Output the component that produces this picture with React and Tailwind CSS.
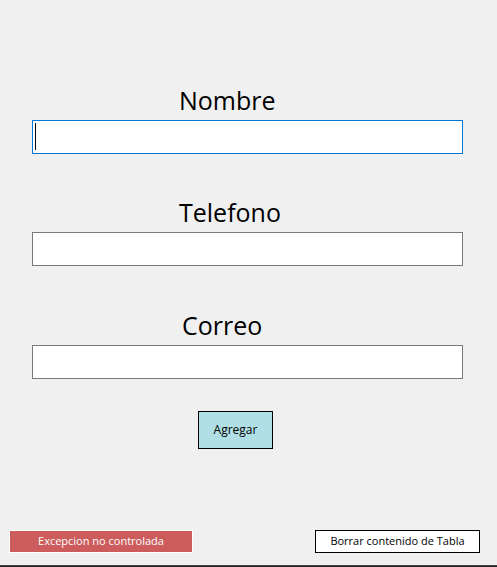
import React from 'react';

const Campo = ({ label, left, top, activo }) => {
    return (
        <div className={`flex flex-col ${top}`}>
            <p className={`h-[34px] leading-[34px] text-[25px] text-black ${left}`}>{label}</p>
            <div className={`mt-[3px] ml-[32px] w-[431px] h-[34px] bg-white border ${activo ? 'border-[#0078d7]' : 'border-[#7a7a7a]'} pl-[2px] pt-[2px]`}>
                {activo && <div className='w-px h-[27px] bg-black'></div>}
            </div>
        </div>
    );
};

export default function App() {
    return (
        <div className="w-[497px] h-[567px] bg-[#f0f0f0] flex flex-col overflow-hidden" style={{ fontFamily: '"Open Sans", "Noto Sans", sans-serif' }}>
            <Campo label="Nombre" left="ml-[179px]" top="mt-[83px]" activo />
            <Campo label="Telefono" left="ml-[179px]" top="mt-[41px]" />
            <Campo label="Correo" left="ml-[182px]" top="mt-[42px]" />

            <div className='mt-[32px] ml-[198px]'>
                <button className='w-[75px] h-[38px] bg-[#b0e0e6] border border-black text-[12px] text-black'>
                    Agregar
                </button>
            </div>

            <div className='mt-auto flex justify-between pl-[9px] pr-[17px] pb-[12px]'>
                <button className='w-[184px] h-[23px] bg-[#cd5c5c] border border-white text-[11px] text-white'>
                    Excepcion no controlada
                </button>
                <button className='w-[165px] h-[23px] bg-white border border-black text-[11px] text-black'>
                    Borrar contenido de Tabla
                </button>
            </div>
            <div className='h-px bg-[#454545]'></div>
            <div className='h-px bg-[#1e1e1e]'></div>
        </div>
    );
}
